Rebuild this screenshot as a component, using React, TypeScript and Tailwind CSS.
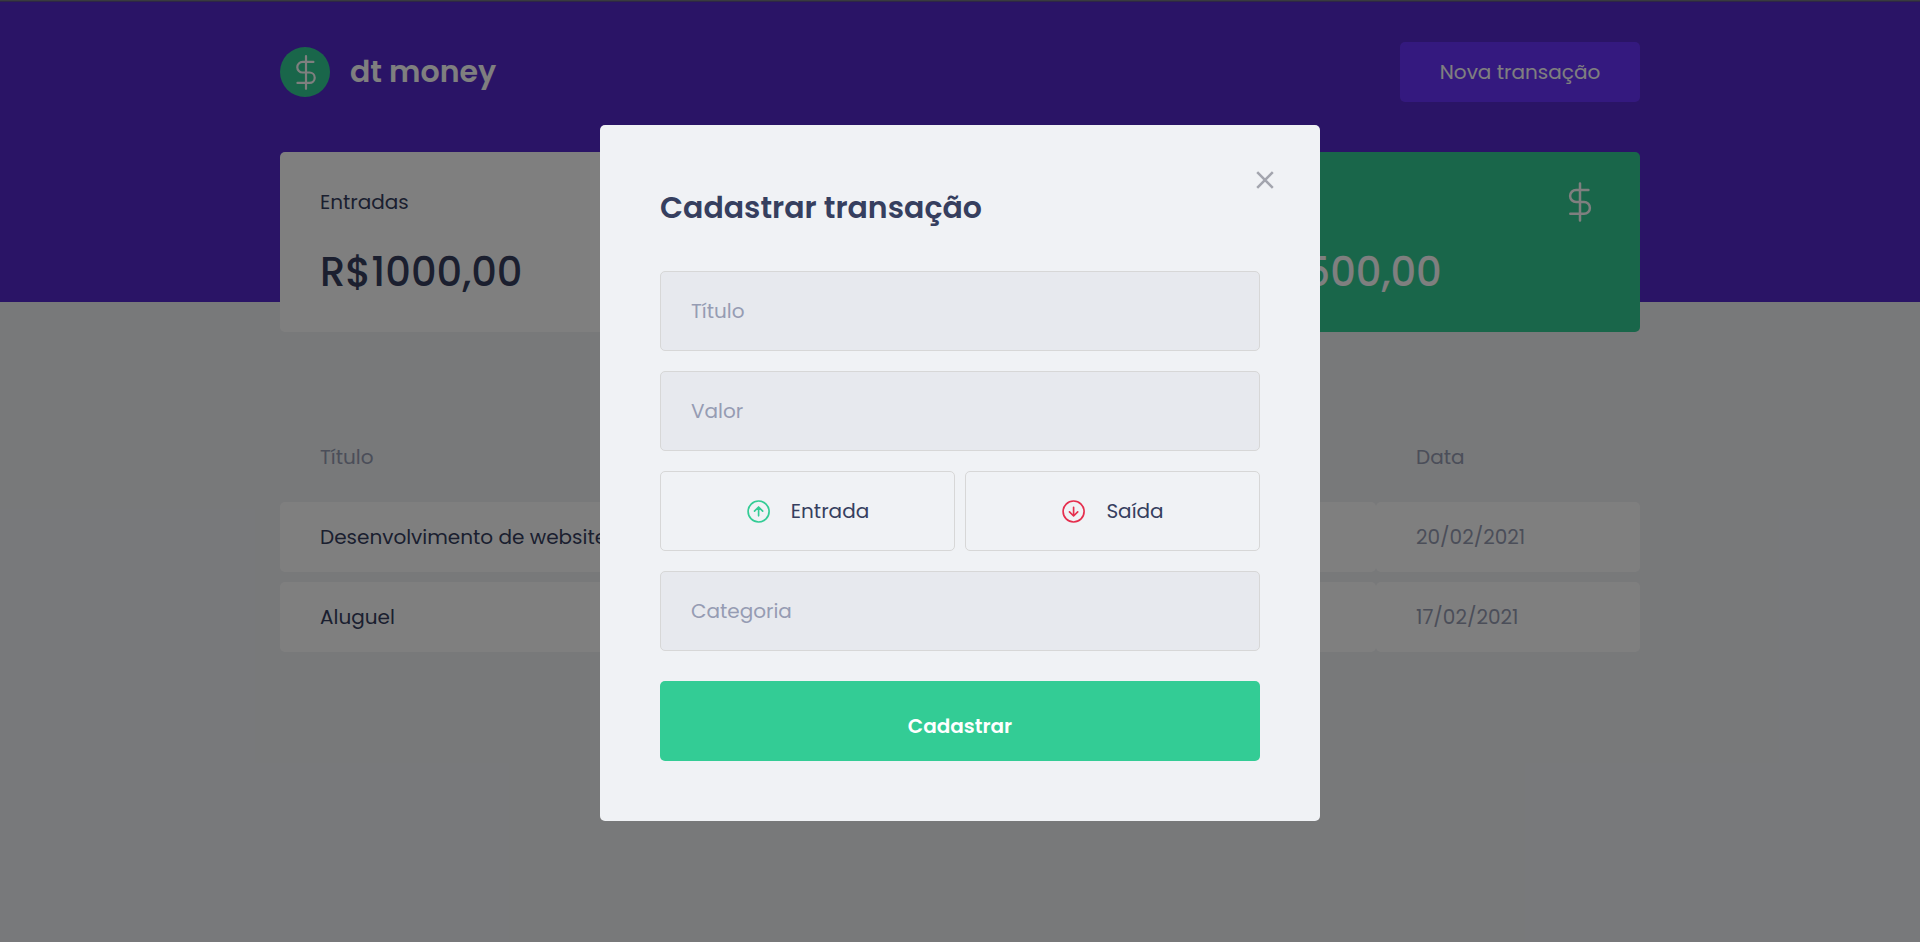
import React from "react";

function Dollar({ className }: { className: string }) {
  return (
    <svg className={className} viewBox="0 0 24 42" fill="none" stroke="#fff" strokeWidth="2.5" strokeLinecap="round" strokeLinejoin="round">
      <path d="M12 2.5v37M20.4 9H8.1a6 6 0 0 0 0 12H16a5.9 5.9 0 0 1 0 11.8H2.3" />
    </svg>
  );
}

function Arrow({ className, d }: { className: string; d: string }) {
  return (
    <svg className={className} viewBox="-0.6 -0.5 24 24" fill="none" stroke="currentColor" strokeWidth="1.65" strokeLinecap="round" strokeLinejoin="round">
      <circle cx="12" cy="12" r="10.5" />
      <path d={d} />
    </svg>
  );
}

const rows = [
  { title: "Desenvolvimento de website", date: "20/02/2021" },
  { title: "Aluguel", date: "17/02/2021" },
];

function Page() {
  return (
    <div className="h-[942px] overflow-hidden bg-[#f0f2f5]">
      <header className="h-[302px] bg-[#5429cc] px-[280px] pt-[42px]">
        <div className="flex h-[60px] items-center justify-between">
          <div className="flex items-center gap-5">
            <div className="flex size-[50px] items-center justify-center rounded-full bg-[#33cc95]">
              <Dollar className="mt-px ml-px h-[37px] w-[22px]" />
            </div>
            <span className="pb-0.5 text-[30px] leading-[45px] font-semibold text-white">dt money</span>
          </div>
          <button className="h-[60px] w-[240px] rounded-[5px] bg-[#6933ff] text-[20px] text-white">Nova transação</button>
        </div>
        <div className="mt-[50px] grid h-[180px] grid-cols-3 gap-10">
          <div className="rounded-[5px] bg-white px-10 pt-[35px] text-[#363f5f]">
            <div className="h-[30px] text-[20px] leading-[30px]">Entradas</div>
            <div className="mt-[25px] text-[40px] leading-[60px] font-medium">R$1000,00</div>
          </div>
          <div className="rounded-[5px] bg-white" />
          <div className="rounded-[5px] bg-[#33cc95] px-10 pt-[29px] text-white">
            <div className="flex h-[42px] items-center justify-end">
              <Dollar className="mr-2 h-[42px] w-6" />
            </div>
            <div className="mt-[19px] text-[40px] leading-[60px] font-medium">R$500,00</div>
          </div>
        </div>
      </header>
      <main className="px-[280px] pt-[120px]">
        <div className="flex h-[70px] items-center text-[20px] text-[#969cb3]">
          <span className="w-[1096px] pl-10">Título</span>
          <span className="pl-10">Data</span>
        </div>
        <div className="mt-[10px] flex flex-col gap-[10px] text-[20px]">
          {rows.map((r) => (
            <div key={r.title} className="flex h-[70px]">
              <div className="flex w-[1096px] items-center rounded-[5px] bg-white pl-10 text-[#363f5f]">{r.title}</div>
              <div className="flex flex-1 items-center rounded-[5px] bg-white pl-10 text-[#969cb3]">{r.date}</div>
            </div>
          ))}
        </div>
      </main>
    </div>
  );
}

function Field({ label }: { label: string }) {
  return (
    <input
      placeholder={label}
      className="h-20 w-full rounded-[5px] border border-[#d7d7d7] bg-[#e7e9ee] px-[30px] text-[20px] placeholder:text-[#969cb3]"
    />
  );
}

function Modal() {
  return (
    <form className="relative mt-[125px] flex h-[696px] w-[720px] flex-col rounded-[5px] bg-[#f0f2f5] px-[60px] pt-[60px]">
      <svg className="absolute top-[46px] right-[46px] size-[18px]" viewBox="0 0 18 18" stroke="#a3a5ae" strokeWidth="2.5">
        <path d="M1.2 1.2l15.6 15.6M16.8 1.2L1.2 16.8" />
      </svg>
      <h2 className="mb-[41px] h-[45px] text-[30px] leading-[45px] font-semibold text-[#363f5f]">Cadastrar transação</h2>
      <div className="flex flex-col gap-5">
        <Field label="Título" />
        <Field label="Valor" />
        <div className="grid grid-cols-2 gap-[10px] text-[20px] text-[#363f5f]">
          <button type="button" className="flex h-20 items-center justify-center gap-[21px] rounded-[5px] border border-[#d7d7d7]">
            <Arrow className="size-6 text-[#33cc95]" d="M12 16.3V7.5M7.9 11.6L12 7.5l4.1 4.1" />
            <span>Entrada</span>
          </button>
          <button type="button" className="flex h-20 items-center justify-center gap-[21px] rounded-[5px] border border-[#d7d7d7]">
            <Arrow className="size-6 text-[#e52e4d]" d="M12 7.7v8.8M7.9 12.4l4.1 4.1 4.1-4.1" />
            <span>Saída</span>
          </button>
        </div>
        <Field label="Categoria" />
      </div>
      <button type="button" className="mt-[30px] h-20 rounded-[5px] bg-[#33cc95] pt-[9px] text-[20px] font-semibold text-white">Cadastrar</button>
    </form>
  );
}

export default function App() {
  return (
    <div className="relative h-[942px] w-[1920px] overflow-hidden font-['Poppins','Inter',sans-serif]">
      <Page />
      <div className="absolute inset-0 flex items-start justify-center bg-black/50">
        <Modal />
      </div>
      <div className="absolute inset-x-0 top-0 h-0.5 border-b border-[#2e2646] bg-[#393b3f]" />
    </div>
  );
}
